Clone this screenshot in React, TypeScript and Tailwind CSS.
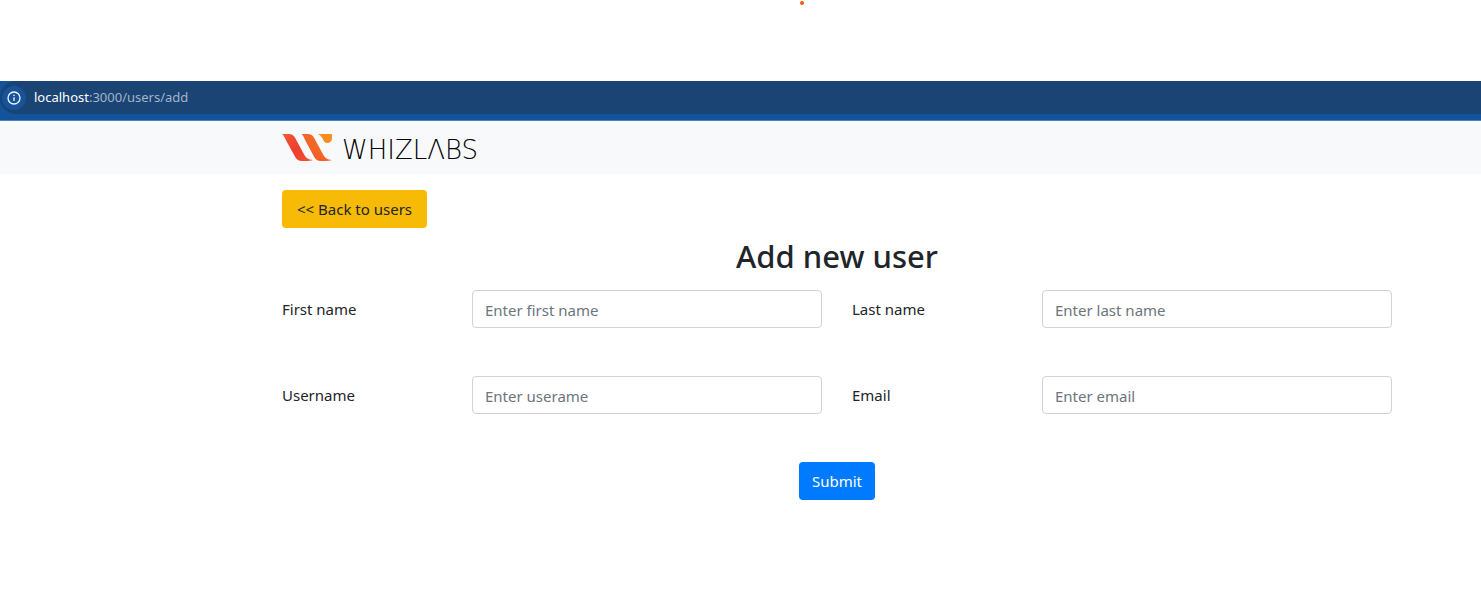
import type { ReactNode } from "react";

function WhizlabsMark() {
  return (
    <svg width="50" height="27" viewBox="0 0 50 27" aria-hidden="true">
      <defs>
        <linearGradient id="left-stroke" x1="0" y1="0" x2="1" y2="1">
          <stop offset="0" stopColor="#f15a2e" />
          <stop offset="0.5" stopColor="#ee3f32" />
          <stop offset="1" stopColor="#f0502c" />
        </linearGradient>
        <linearGradient id="right-stroke" x1="0" y1="1" x2="1" y2="0">
          <stop offset="0" stopColor="#f0532b" />
          <stop offset="1" stopColor="#f47a22" />
        </linearGradient>
      </defs>
      <path
        d="M0 0 H6.5 C10 0 11.8 1.6 13.2 4 L21.8 20 C23.8 23.8 26 25.6 31 26 C29 26.8 26 27 23 27 H20 C16.5 27 14.8 25.8 13.2 23 L4.4 7 C3 4.2 2 1.6 0 0Z"
        fill="url(#left-stroke)"
      />
      <path
        d="M19.4 0 H25.5 C29 0 30.8 1.6 32.2 4 L40.8 20 C42.8 23.8 45 25.6 50 26 C48 26.8 45 27 42 27 H39 C35.5 27 33.8 25.8 32.2 23 L23.6 7 C22.2 4.2 21.4 1.6 19.4 0Z"
        fill="url(#right-stroke)"
      />
      <path d="M36 0 H49 Q50 0 50 1 V4.2 C50 7 48 9 45.3 9 C42.5 9 41.8 7 40.8 5 C39.6 2.8 38.5 1 36 0Z" fill="#f78d1e" />
    </svg>
  );
}

function InfoIcon() {
  return (
    <svg width="14" height="14" viewBox="0 0 14 14" fill="none" aria-hidden="true">
      <circle cx="7" cy="7" r="6" stroke="#f4f8fc" strokeWidth="1.3" />
      <path d="M7 6.2V10" stroke="#f4f8fc" strokeWidth="1.3" />
      <circle cx="7" cy="4.2" r="0.8" fill="#f4f8fc" />
    </svg>
  );
}

function Field({ id, label, placeholder, type = "text" }: { id: string; label: ReactNode; placeholder: string; type?: string }) {
  return (
    <>
      <label htmlFor={id} className="col-span-2 self-center">
        {label}
      </label>
      <input
        id={id}
        type={type}
        placeholder={placeholder}
        className="col-span-4 h-[38px] w-full rounded border border-[#ced4da] bg-white px-3 pt-0.5 placeholder:text-[#6c757d]"
      />
    </>
  );
}

export default function App() {
  return (
    <div className="min-h-screen bg-white font-['Noto_Sans',sans-serif] text-[15px] leading-6 text-[#212529]">
      <div className="flex h-[81px] justify-center pt-px pl-[123px]">
        <span className="size-1 rounded-full bg-[#fa5a0a]" />
      </div>

      <div className="border-b border-[#4a80ba] bg-[#14529b] pb-1.5">
        <div className="flex h-[33px] items-center gap-2 rounded-l-2xl bg-[#194474] pl-0.5 text-[13px]">
          <button type="button" aria-label="Site information" className="flex size-6 items-center justify-center rounded-full bg-[#16539b]">
            <InfoIcon />
          </button>
          <div className="pb-0.5 text-[#a3b5c8]">
            <span className="text-white">localhost</span>:3000/users/add
          </div>
        </div>
      </div>

      <nav className="bg-[#f8f9fa] pr-[89px] pl-[282px]">
        <a href="#home" aria-label="Whizlabs" className="flex h-[53px] w-fit items-center gap-2.5">
          <WhizlabsMark />
          <span className="pt-1 font-['DejaVu_Sans','DejaVu_Sans_Light',sans-serif] text-[26px] font-extralight text-black">WHIZLΛBS</span>
        </a>
      </nav>

      <main className="flex flex-col pt-4 pr-[89px] pl-[282px]">
        <a href="#users" className="flex h-[38px] w-fit items-center rounded bg-[#f7ba07] px-[15px]">
          &lt;&lt; Back to users
        </a>
        <h1 className="mt-2 mb-3.5 text-center text-[31px] leading-10 font-medium">Add new user</h1>
        <form className="flex flex-col gap-12" onSubmit={(e) => e.preventDefault()}>
          <div className="grid grid-cols-12 gap-x-[30px] gap-y-12">
            <Field id="first-name" label="First name" placeholder="Enter first name" />
            <Field id="last-name" label="Last name" placeholder="Enter last name" />
            <Field id="username" label="Username" placeholder="Enter userame" />
            <Field id="email" label="Email" placeholder="Enter email" type="email" />
          </div>
          <button type="submit" className="h-[38px] self-center rounded bg-[#007bff] px-[13px] text-white">
            Submit
          </button>
        </form>
      </main>
    </div>
  );
}
